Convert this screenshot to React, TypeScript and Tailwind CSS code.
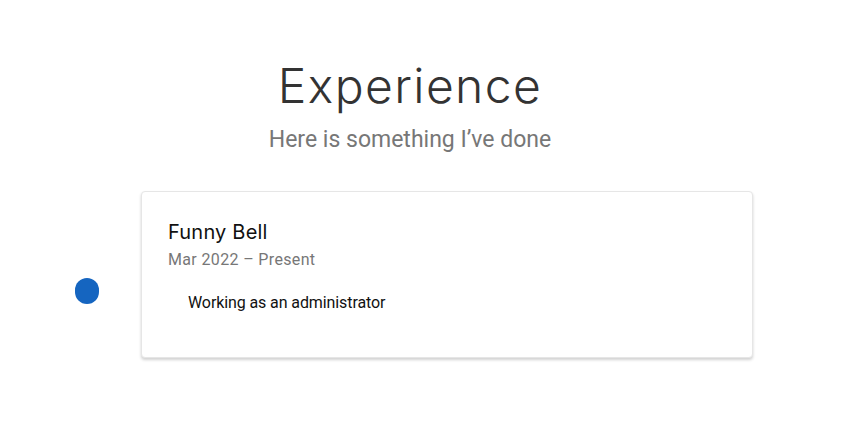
import React from 'react';

// 经历条目
interface Item {
  company: string;
  period: string;
  duty: string;
}

const items: Item[] = [
  { company: 'Funny Bell', period: 'Mar 2022 – Present', duty: 'Working as an administrator' },
];

const TimelineRow: React.FC<{ item: Item }> = ({ item }) => (
  <div className="flex">
    <div className="w-[75px] shrink-0" />
    <div className="w-6 shrink-0 pt-[87px]">
      <div className="w-6 h-[26px] rounded-full bg-[#1565c0]" />
    </div>
    <div className="ml-[42px] w-[612px] h-[167px] rounded bg-white border border-[#e6e6e6] shadow-[0_2px_3px_rgba(0,0,0,0.18)] px-[26px] pt-[26px]">
      <h3 className="font-['Inter',sans-serif] text-[20px] leading-[28px] tracking-[0.2px] text-[#111]">{item.company}</h3>
      <p className="mt-[2px] font-['Roboto',sans-serif] text-[16px] leading-[24px] tracking-[0.35px] text-[#777]">{item.period}</p>
      <ul className="mt-[19px] pl-5 font-['Roboto',sans-serif] text-[16px] leading-[24px] tracking-[-0.1px] text-[#111]">
        <li>{item.duty}</li>
      </ul>
    </div>
  </div>
);

export default function App() {
  return (
    <div className="w-[849px] h-[440px] bg-white overflow-hidden">
      <div className="w-[820px] pt-[56px] text-center">
        <h2 className="font-['Inter',sans-serif] font-light text-[48px] leading-[60px] tracking-[1.4px] text-[#333]">Experience</h2>
        <p className="mt-[10px] font-['Roboto',sans-serif] text-[23px] leading-[28px] text-[#777]">Here is something I’ve done</p>
      </div>
      <div className="mt-[37px]">
        {items.map((item) => (
          <TimelineRow key={item.company} item={item} />
        ))}
      </div>
    </div>
  );
}
